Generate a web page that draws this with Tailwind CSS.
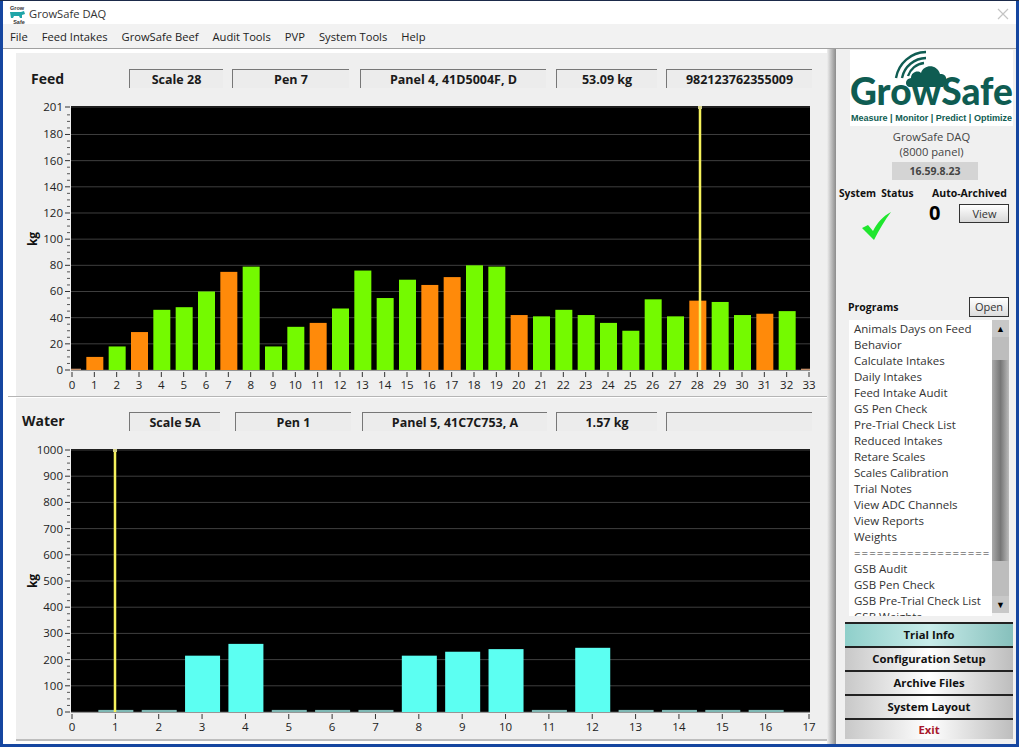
<!DOCTYPE html>
<html lang="en">
<head>
    <meta charset="UTF-8">
    <title>GrowSafe DAQ</title>
    <script src="https://cdn.jsdelivr.net/npm/@tailwindcss/browser@4"></script>
</head>
<body class="bg-[#1546a0] font-['Open_Sans',sans-serif] text-[#1a1a1a] overflow-hidden">
    <div class="w-[1019px] h-[747px] pl-[3px] pr-[3px] pb-[3px] flex flex-col border-t border-[#1b2a4a]">
        <!-- title bar -->
        <div class="h-[23px] pt-[3px] bg-white flex items-center shrink-0">
            <svg class="ml-[4px]" width="20" height="20" viewBox="0 0 20 20">
                <text x="10" y="6" text-anchor="middle" font-size="5.5" font-weight="700" font-family="Liberation Sans" fill="#333">Grow</text>
                <path d="M3 8h11l3-1 1 3-3 1v3h-2l-1-2H7l-1 2H4z" fill="#1fa5a8"/>
                <text x="12" y="20" text-anchor="middle" font-size="5.5" font-weight="700" font-family="Liberation Sans" fill="#333">Safe</text>
            </svg>
            <span class="ml-[2px] text-[11.2px] text-[#333]">GrowSafe DAQ</span>
            <svg class="ml-auto mr-[7px]" width="12" height="12" viewBox="0 0 12 12"><path d="M1 1l10 10M11 1L1 11" stroke="#c4c4c4" stroke-width="1.2"/></svg>
        </div>
        <!-- menu -->
        <div class="h-[25px] pt-[2px] bg-[#f2f2f2] border-b border-[#a0a0a0] flex items-center gap-[14px] pl-[7px] text-[11.2px] text-[#222] shrink-0">
            <span>File</span><span>Feed Intakes</span><span>GrowSafe Beef</span><span>Audit Tools</span><span>PVP</span><span>System Tools</span><span>Help</span>
        </div>
        <div class="flex-1 flex bg-white min-h-0">
            <!-- charts column -->
            <div class="ml-[13px] mt-[4px] w-[811px] h-[688px] bg-[#efefef] border-b-2 border-[#bdbdbd] flex flex-col">
                <div class="h-[343px] shrink-0">
                    <div class="flex items-center h-[43px]">
                        <div class="w-[113px] pl-[15px] text-[14px] font-bold pt-[7px]">Feed</div>
                        <div class="flex mt-[8px] text-[12.5px] font-bold">
                            <div class="w-[94px] h-[19px] ml-0 border-t border-l border-[#777] bg-[#ececec] text-center leading-[19px]">Scale 28</div>
                            <div class="w-[117px] h-[19px] ml-[9px] border-t border-l border-[#777] bg-[#ececec] text-center leading-[19px]">Pen 7</div>
                            <div class="w-[186px] h-[19px] ml-[11px] border-t border-l border-[#777] bg-[#ececec] text-center leading-[19px]">Panel 4, 41D5004F, D</div>
                            <div class="w-[101px] h-[19px] ml-[10px] border-t border-l border-[#777] bg-[#ececec] text-center leading-[19px]">53.09 kg</div>
                            <div class="w-[146px] h-[19px] ml-[9px] border-t border-l border-[#777] bg-[#ececec] text-center leading-[19px]">982123762355009</div>
                        </div>
                    </div>
                    <svg id="feedChart" class="block" width="811" height="300" viewBox="16 96 811 300"></svg>
                </div>
                <!-- divider runs a little past the panel on the left -->
                <div class="h-[2px] -ml-[8px] bg-[#b5b5b5] border-b border-white shrink-0"></div>
                <div class="flex-1 min-h-0">
                    <div class="flex items-center h-[43px]">
                        <div class="w-[113px] pl-[6px] text-[14px] font-bold pt-[1px]">Water</div>
                        <div class="flex mt-[4px] text-[12.5px] font-bold">
                            <div class="w-[91px] h-[19px] border-t border-l border-[#777] bg-[#ececec] text-center leading-[19px]">Scale 5A</div>
                            <div class="w-[116px] h-[19px] ml-[15px] border-t border-l border-[#777] bg-[#ececec] text-center leading-[19px]">Pen 1</div>
                            <div class="w-[185px] h-[19px] ml-[11px] border-t border-l border-[#777] bg-[#ececec] text-center leading-[19px]">Panel 5, 41C7C753, A</div>
                            <div class="w-[101px] h-[19px] ml-[9px] border-t border-l border-[#777] bg-[#ececec] text-center leading-[19px]">1.57 kg</div>
                            <div class="w-[146px] h-[19px] ml-[9px] border-t border-l border-[#777] bg-[#ececec]"></div>
                        </div>
                    </div>
                    <svg id="waterChart" class="block" width="811" height="299" viewBox="16 441 811 299"></svg>
                </div>
            </div>
            <!-- shadow strip -->
            <div class="w-[9px] bg-linear-to-r from-[#efefef] to-[#8c8c8c] shrink-0"></div>
            <!-- right panel -->
            <div class="flex-1 bg-[#f0f0f0] flex flex-col min-w-0">
                <svg class="block ml-[14px] mt-[1px] bg-white shrink-0" width="163" height="76" viewBox="850 50 163 76">
                    <g fill="none" stroke="#0f5c52" stroke-width="2.4">
                        <path d="M896 78a31 31 0 0 1 30-26"/>
                        <path d="M902 78a25 25 0 0 1 24-20"/>
                        <path d="M908 76a19 19 0 0 1 16-13"/>
                    </g>
                    <path d="M910 87c-5 0-6-8 1-9 0-6 7-8 10-5 3-9 16-9 19 1 6-1 7 5 6 8l-3 5z" fill="#0f5c52"/>
                    <text x="850" y="105" font-family="Lato" font-weight="900" font-size="38" textLength="163" lengthAdjust="spacingAndGlyphs" fill="#0f5c52">GrowSafe</text>
                    <text x="851" y="121" font-family="Liberation Sans" font-weight="700" font-size="8.6" textLength="161" lengthAdjust="spacingAndGlyphs" fill="#0f5c52">Measure | Monitor | Predict | Optimize</text>
                </svg>
                <div class="text-center text-[11.2px] leading-[15px] text-[#444] mt-[3px] pl-[13px] pr-[2px]">GrowSafe DAQ<br>(8000 panel)</div>
                <div class="ml-[56px] mt-[3px] w-[86px] h-[18px] bg-[#d4d4d4] text-center text-[10.5px] font-bold leading-[18px] text-[#444]">16.59.8.23</div>
                <div class="flex mt-[6px] text-[10.5px] font-bold leading-[15px] pl-[3px] text-[#111]">
                    <span class="w-[93px] whitespace-pre text-[10.2px]">System  Status</span><span>Auto-Archived</span>
                </div>
                <div class="flex h-[38px]">
                    <svg class="ml-[26px] mt-[11px]" width="29" height="28" viewBox="0 0 29 28"><path d="M0 16l6-3 5 6C15 11 21 4 29 0 23 8 17 18 12 28z" fill="#1fe62e"/></svg>
                    <span class="ml-[38px] text-[20px] font-bold leading-[24px] text-black">0</span>
                    <div class="ml-[19px] mt-[3px] w-[50px] h-[19px] border border-[#333] bg-linear-to-b from-white to-[#d8d8d8] text-center text-[11px] leading-[17px] text-[#333]">View</div>
                </div>
                <div class="flex mt-[57px] items-end pl-[12px] h-[21px]">
                    <span class="text-[10.5px] font-bold text-[#111] leading-[20px]">Programs</span>
                    <div class="ml-auto mr-[7px] w-[40px] h-[20px] border border-[#333] bg-linear-to-b from-white to-[#dcdcdc] text-center text-[11px] leading-[18px] text-[#333]">Open</div>
                </div>
                <!-- programs list -->
                <div class="ml-[13px] mt-[3px] w-[160px] h-[296px] flex shrink-0">
                    <ul id="programs" class="w-[143px] h-[296px] pt-px bg-white overflow-hidden pl-[5px] text-[11.5px] leading-[16px] text-[#333]">
                        <li>Animals Days on Feed</li><li>Behavior</li><li>Calculate Intakes</li><li>Daily Intakes</li><li>Feed Intake Audit</li><li>GS Pen Check</li><li>Pre-Trial Check List</li><li>Reduced Intakes</li><li>Retare Scales</li><li>Scales Calibration</li><li>Trial Notes</li><li>View ADC Channels</li><li>View Reports</li><li>Weights</li><li class="whitespace-nowrap tracking-[1px]">==================</li><li>GSB Audit</li><li>GSB Pen Check</li><li>GSB Pre-Trial Check List</li><li>GSB Weights</li>
                    </ul>
                    <div class="w-[17px] mb-[3px] flex flex-col bg-linear-to-r from-[#aaa] via-[#777] to-[#bbb]">
                        <div class="h-[17px] bg-[#c8c8c8] text-center text-[9px] leading-[17px] text-black">▲</div>
                        <div class="h-[23px] bg-[#bdbdbd]"></div>
                        <div class="flex-1"></div>
                        <div class="h-[35px] bg-[#bdbdbd]"></div>
                        <div class="h-[17px] bg-[#c8c8c8] text-center text-[9px] leading-[17px] text-black">▼</div>
                    </div>
                </div>
                <!-- buttons -->
                <div class="ml-[9px] mt-[6px] w-[168px] flex flex-col text-[11.3px] font-bold text-center text-[#111]">
                    <div class="h-[24px] leading-[22px] border-t-2 border-[#222] bg-linear-to-r from-[#8fcfca] via-[#c8ecea] to-[#86c0bc]">Trial Info</div>
                    <div class="h-[24px] leading-[22px] border-t-2 border-[#222] bg-linear-to-r from-[#c8c8c8] via-white to-[#bdbdbd]">Configuration Setup</div>
                    <div class="h-[24px] leading-[22px] border-t-2 border-[#222] bg-linear-to-r from-[#c8c8c8] via-white to-[#bdbdbd]">Archive Files</div>
                    <div class="h-[24px] leading-[22px] border-t-2 border-[#222] bg-linear-to-r from-[#c8c8c8] via-white to-[#bdbdbd]">System Layout</div>
                    <div class="h-[21px] leading-[19px] border-t-2 border-[#222] bg-linear-to-r from-[#c8c8c8] via-white to-[#bdbdbd] text-[#a8182c]">Exit</div>
                </div>
            </div>
        </div>
    </div>

    <script>
        const GREEN = '#74fa00';
        const ORANGE = '#ff8a0a';
        const CYAN = '#5cfff2';
        const LOW = '#7fb8b4';

        const feedBars = [
            [1, '#c8916a'], [10, ORANGE], [18, GREEN], [29, ORANGE], [46, GREEN], [48, GREEN], [60, GREEN], [75, ORANGE],
            [79, GREEN], [18, GREEN], [33, GREEN], [36, ORANGE], [47, GREEN], [76, GREEN], [55, GREEN], [69, GREEN],
            [65, ORANGE], [71, ORANGE], [80, GREEN], [79, GREEN], [42, ORANGE], [41, GREEN], [46, GREEN], [42, GREEN],
            [36, GREEN], [30, GREEN], [54, GREEN], [41, GREEN], [53, ORANGE], [52, GREEN], [42, GREEN], [43, ORANGE],
            [45, GREEN], [1, '#c8916a']
        ];
        const waterBars = [
            null, [8, LOW], [8, LOW], [215, CYAN], [260, CYAN], [8, LOW], [8, LOW], [8, LOW], [215, CYAN], [230, CYAN],
            [240, CYAN], [8, LOW], [245, CYAN], [8, LOW], [8, LOW], [8, LOW], [8, LOW], null
        ];

        // Draws one plot in page coordinates, the svg viewBox takes care of the offset
        function drawChart(svg, cfg) {
            const x = i => cfg.x0 + i * (cfg.x1 - cfg.x0) / cfg.xMax;
            const y = v => cfg.y0 - v * (cfg.y0 - cfg.yTop) / cfg.yMax;
            let out = `<rect x="71" y="${cfg.yTop - 1}" width="739" height="${cfg.y0 - cfg.yTop + 1}" fill="#000"/>`;

            const labels = cfg.yTicks;
            labels.forEach(v => {
                out += `<line x1="71" x2="810" y1="${y(v)}" y2="${y(v)}" stroke="#3f3f3f"/>`;
            });
            cfg.bars.forEach((b, i) => {
                if (!b) return;
                const half = cfg.barWidth / 2;
                const left = Math.max(x(i) - half + 0.5, 71);
                const right = Math.min(x(i) + half + 0.5, 810);
                out += `<rect x="${left}" y="${y(b[0])}" width="${right - left}" height="${cfg.y0 - y(b[0])}" fill="${b[1]}"/>`;
            });
            // cursor
            out += `<line x1="${cfg.cursor}" x2="${cfg.cursor}" y1="${cfg.yTop}" y2="${cfg.y0}" stroke="#f6f25c" stroke-width="2.5"/>`;
            out += `<rect x="${cfg.cursor - 2}" y="${cfg.yTop - 1}" width="4" height="3" fill="#d8d48a"/>`;

            const font = 'font-family="Open Sans" font-size="11.5" fill="#222"';
            labels.forEach(v => {
                out += `<line x1="65" x2="70" y1="${y(v)}" y2="${y(v)}" stroke="#333"/>`;
                out += `<text x="63" y="${y(v) + 4}" text-anchor="end" ${font}>${v}</text>`;
            });
            for (let v = 0; v < cfg.yMax; v += cfg.yStep / 4) {
                if (v % cfg.yStep) out += `<line x1="67" x2="70" y1="${y(v)}" y2="${y(v)}" stroke="#555"/>`;
            }
            for (let i = 0; i <= cfg.xMax; i++) {
                out += `<line x1="${x(i)}" x2="${x(i)}" y1="${cfg.y0 + 2}" y2="${cfg.y0 + 7}" stroke="#333"/>`;
                out += `<text x="${x(i)}" y="${cfg.y0 + 19}" text-anchor="middle" ${font}>${i}</text>`;
            }
            out += `<text transform="translate(37 ${cfg.kgY}) rotate(-90)" text-anchor="middle" font-family="Open Sans" font-weight="700" font-size="12" fill="#111">kg</text>`;
            svg.innerHTML = out;
        }

        const range = (to, step) => Array.from({ length: Math.floor(to / step) + 1 }, (_, i) => i * step);

        drawChart(document.getElementById('feedChart'), {
            x0: 72, x1: 809, xMax: 33, y0: 370, yTop: 107, yMax: 201, yStep: 20,
            yTicks: [...range(200, 20), 201].filter(v => v !== 200),
            bars: feedBars, barWidth: 17, cursor: 700, kgY: 239
        });
        drawChart(document.getElementById('waterChart'), {
            x0: 72, x1: 809, xMax: 17, y0: 712, yTop: 450, yMax: 1000, yStep: 100,
            yTicks: range(1000, 100),
            bars: waterBars, barWidth: 35, cursor: 115, kgY: 581
        });
    </script>
</body>
</html>
